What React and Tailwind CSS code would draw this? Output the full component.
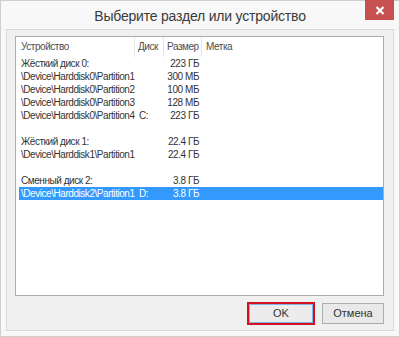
import React from "react";

const rows = [
  { dev: "Жёсткий диск 0:", disk: "", size: "223 ГБ" },
  { dev: "\\Device\\Harddisk0\\Partition1", disk: "", size: "300 МБ" },
  { dev: "\\Device\\Harddisk0\\Partition2", disk: "", size: "100 МБ" },
  { dev: "\\Device\\Harddisk0\\Partition3", disk: "", size: "128 МБ" },
  { dev: "\\Device\\Harddisk0\\Partition4", disk: "C:", size: "223 ГБ" },
  null,
  { dev: "Жёсткий диск 1:", disk: "", size: "22.4 ГБ" },
  { dev: "\\Device\\Harddisk1\\Partition1", disk: "", size: "22.4 ГБ" },
  null,
  { dev: "Сменный диск 2:", disk: "", size: "3.8 ГБ" },
  { dev: "\\Device\\Harddisk2\\Partition1", disk: "D:", size: "3.8 ГБ", selected: true },
];

function Row({ row }) {
  if (!row) return <div className="h-[13px]" />;
  const sel = row.selected;
  return (
    <div
      className={
        "flex h-[13px] items-center ml-[3px] " +
        (sel ? "bg-[#3399ff] text-white" : "text-[#333]")
      }
    >
      <div className="w-[116px] pl-[2px] whitespace-nowrap">{row.dev}</div>
      <div className="w-[29px] pl-[4px]">{row.disk}</div>
      <div className="w-[38px] pr-[3px] text-right">{row.size}</div>
    </div>
  );
}

export default function App() {
  return (
    <div
      className="w-[400px] h-[337px] bg-[#f8f8f8] border border-[#cfcfcf] flex flex-col"
      style={{ fontFamily: '"Liberation Sans", Arial, sans-serif' }}
    >
      {/* title bar */}
      <div className="relative h-[28px] flex items-center justify-center">
        <span className="text-[14px] tracking-[-0.2px] text-[#3a3a3a] mt-[3px]">Выберите раздел или устройство</span>
        <button className="absolute top-[-1px] right-[5px] w-[29px] h-[20px] bg-[#c75050] flex items-center justify-center">
          <svg width="10" height="9" viewBox="0 0 10 9">
            <path d="M1.5 1 L8.5 8 M8.5 1 L1.5 8" stroke="white" strokeWidth="2.2" />
          </svg>
        </button>
      </div>

      {/* client area */}
      <div className="flex-1 mx-[5px] mb-[5px] border border-[#dadada] bg-[#f0f0f0] flex flex-col pl-[8px] pr-[9px] pt-[6px] pb-[5px]">
        <div className="flex-1 bg-white border border-[#acacac] text-[10px] tracking-[-0.45px] leading-none">
          <div className="flex h-[20px] items-center text-[#4d4d4d]">
            <div className="w-[119px] pl-[5px] h-full flex items-center border-r border-[#e5e5e5]">Устройство</div>
            <div className="w-[29px] pl-[3px] h-full flex items-center border-r border-[#e5e5e5]">Диск</div>
            <div className="w-[38px] pl-[3px] h-full flex items-center border-r border-[#e5e5e5]">Размер</div>
            <div className="pl-[4px]">Метка</div>
          </div>
          <div>
            {rows.map((r, i) => (
              <Row key={i} row={r} />
            ))}
          </div>
        </div>

        <div className="flex justify-end gap-[7px] mt-[6px] text-[11px] text-[#333]">
          <button className="w-[68px] h-[23px] border-2 border-[#d2121e] p-0">
            <div className="h-full w-full border border-[#7eb4ea] bg-[#ececec] flex items-center justify-center">OK</div>
          </button>
          <button className="w-[62px] h-[21px] mt-[1px] border border-[#adadad] bg-[#e9e9e9] flex items-center justify-center">
            Отмена
          </button>
        </div>
      </div>
    </div>
  );
}
